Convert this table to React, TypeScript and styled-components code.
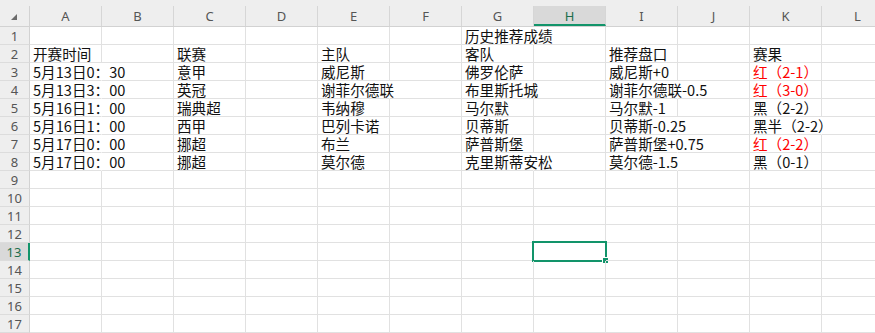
import React from 'react';
import styled, { createGlobalStyle, css } from 'styled-components';

const COLUMNS = ['A', 'B', 'C', 'D', 'E', 'F', 'G', 'H', 'I', 'J', 'K', 'L'];
const ROW_COUNT = 17;
const ACTIVE_COL = 'H';
const ACTIVE_ROW = 13;

const GREEN = '#12946a';
const GRID = '#e1e1e1';

interface CellData {
  text: string;
  red?: boolean;
  spill?: boolean;
}

const sheet: Record<number, Record<string, CellData>> = {
  1: { G: { text: '历史推荐成绩', spill: true } },
  2: {
    A: { text: '开赛时间' },
    C: { text: '联赛' },
    E: { text: '主队' },
    G: { text: '客队' },
    I: { text: '推荐盘口' },
    K: { text: '赛果' },
  },
  3: {
    A: { text: '5月13日0：30', spill: true },
    C: { text: '意甲' },
    E: { text: '威尼斯' },
    G: { text: '佛罗伦萨' },
    I: { text: '威尼斯+0' },
    K: { text: '红（2-1）', red: true },
  },
  4: {
    A: { text: '5月13日3：00', spill: true },
    C: { text: '英冠' },
    E: { text: '谢菲尔德联', spill: true },
    G: { text: '布里斯托城', spill: true },
    I: { text: '谢菲尔德联-0.5', spill: true },
    K: { text: '红（3-0）', red: true },
  },
  5: {
    A: { text: '5月16日1：00', spill: true },
    C: { text: '瑞典超' },
    E: { text: '韦纳穆' },
    G: { text: '马尔默' },
    I: { text: '马尔默-1' },
    K: { text: '黑（2-2）' },
  },
  6: {
    A: { text: '5月16日1：00', spill: true },
    C: { text: '西甲' },
    E: { text: '巴列卡诺' },
    G: { text: '贝蒂斯' },
    I: { text: '贝蒂斯-0.25', spill: true },
    K: { text: '黑半（2-2）', spill: true },
  },
  7: {
    A: { text: '5月17日0：00', spill: true },
    C: { text: '挪超' },
    E: { text: '布兰' },
    G: { text: '萨普斯堡' },
    I: { text: '萨普斯堡+0.75', spill: true },
    K: { text: '红（2-2）', red: true },
  },
  8: {
    A: { text: '5月17日0：00', spill: true },
    C: { text: '挪超' },
    E: { text: '莫尔德' },
    G: { text: '克里斯蒂安松', spill: true },
    I: { text: '莫尔德-1.5', spill: true },
    K: { text: '黑（0-1）' },
  },
};

const GlobalStyle = createGlobalStyle`
  html, body {
    margin: 0;
    padding: 0;
    background: #ffffff;
    overflow: hidden;
  }
`;

const Sheet = styled.div`
  width: 875px;
  height: 333px;
  overflow: hidden;
  background: #ffffff;
`;

const HeaderBar = styled.div`
  display: flex;
  padding-top: 6px;
  background: #eeeeee;
  border-bottom: 1px solid #d2d2d2;
`;

const Corner = styled.div`
  position: relative;
  flex: 0 0 30px;
  height: 20px;
  box-sizing: border-box;
  border-right: 1px solid #d2d2d2;

  &::after {
    content: '';
    position: absolute;
    left: 11px;
    top: 8px;
    border-style: solid;
    border-width: 0 0 6px 6px;
    border-color: transparent transparent #6b6b6b transparent;
  }
`;

const ColumnHead = styled.div<{ $active?: boolean }>`
  flex: 0 0 72px;
  height: 20px;
  box-sizing: border-box;
  display: flex;
  align-items: center;
  justify-content: center;
  border-right: 1px solid #d6d6d6;
  font-family: 'Noto Sans', 'Liberation Sans', sans-serif;
  font-size: 13px;
  color: #555555;

  ${({ $active }) =>
    $active &&
    css`
      background: #d9d9d9;
      color: #1d6e4c;
      border-bottom: 2px solid ${GREEN};
      padding-top: 2px;
    `}
`;

const Row = styled.div`
  display: flex;
  height: 18px;
`;

const RowHead = styled.div<{ $active?: boolean }>`
  flex: 0 0 30px;
  box-sizing: border-box;
  display: flex;
  align-items: center;
  justify-content: center;
  background: #eeeeee;
  border-right: 1px solid #d2d2d2;
  border-bottom: 1px solid #dcdcdc;
  font-family: 'Noto Sans', 'Liberation Sans', sans-serif;
  font-size: 13px;
  color: #555555;

  ${({ $active }) =>
    $active &&
    css`
      background: #d9d9d9;
      color: #1d6e4c;
      border-right: 2px solid ${GREEN};
    `}
`;

const Cell = styled.div<{ $red?: boolean; $spill?: boolean }>`
  position: relative;
  flex: 0 0 72px;
  width: 72px;
  min-width: 0;
  box-sizing: border-box;
  height: 18px;
  padding-left: 3px;
  border-right: 1px solid ${({ $spill }) => ($spill ? 'transparent' : GRID)};
  border-bottom: 1px solid ${GRID};
  white-space: nowrap;
  overflow: visible;
  font-family: 'Noto Sans CJK SC', 'Noto Sans', sans-serif;
  font-size: 14.6px;
  line-height: 18px;
  color: ${({ $red }) => ($red ? '#ff0000' : '#111111')};
`;

const Selection = styled.div`
  position: absolute;
  left: -2px;
  top: -2px;
  right: -2px;
  bottom: -2px;
  border: 2px solid ${GREEN};
  pointer-events: none;

  &::after {
    content: '';
    position: absolute;
    right: -4px;
    bottom: -4px;
    width: 5px;
    height: 5px;
    background: ${GREEN};
    border: 1px solid #ffffff;
  }
`;

export default function App() {
  const rows = Array.from({ length: ROW_COUNT }, (_, i) => i + 1);

  return (
    <>
      <GlobalStyle />
      <Sheet>
        <HeaderBar>
          <Corner />
          {COLUMNS.map((col) => (
            <ColumnHead key={col} $active={col === ACTIVE_COL}>
              {col}
            </ColumnHead>
          ))}
        </HeaderBar>
        {rows.map((r) => (
          <Row key={r}>
            <RowHead $active={r === ACTIVE_ROW}>{r}</RowHead>
            {COLUMNS.map((col) => {
              const data = sheet[r]?.[col];
              const selected = r === ACTIVE_ROW && col === ACTIVE_COL;
              return (
                <Cell key={col} $red={data?.red} $spill={data?.spill}>
                  {data?.text}
                  {selected && <Selection />}
                </Cell>
              );
            })}
          </Row>
        ))}
      </Sheet>
    </>
  );
}
